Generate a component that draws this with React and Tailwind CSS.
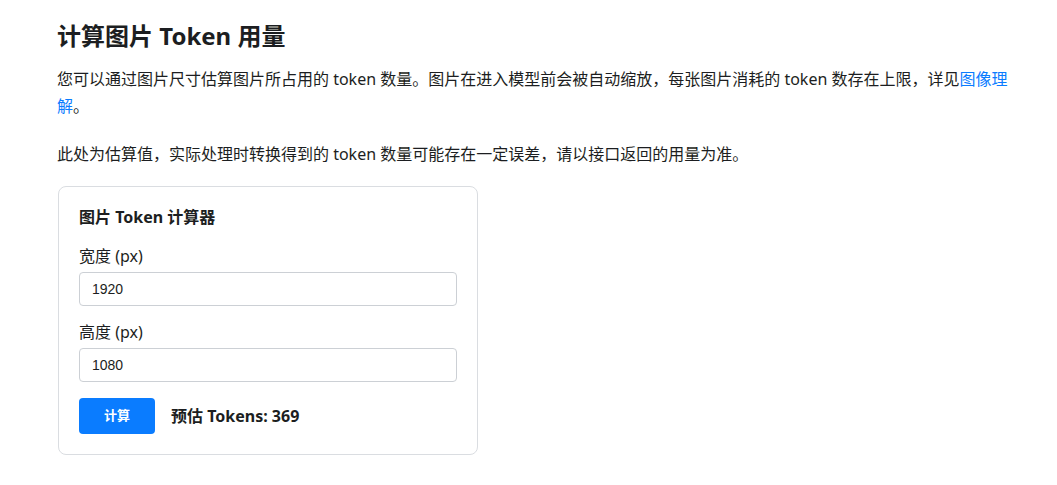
import { useState } from "react";

const font = { fontFamily: '"Noto Sans", "Noto Sans CJK SC", sans-serif' };

export default function App() {
  const [width, setWidth] = useState("1920");
  const [height, setHeight] = useState("1080");
  const [tokens, setTokens] = useState(369);

  function calc() {
    const w = Number(width) || 0;
    const h = Number(height) || 0;
    setTokens(Math.ceil((w / 28) * (h / 28) / 10) + 0 || 0);
  }

  return (
    <div className="min-h-screen bg-white text-[#1c1e21]" style={font}>
      <div className="pl-[57px] pr-[40px] pt-[18px]">
        {/* Title */}
        <h1 className="text-[24px] font-bold leading-[36px] mb-[12px]">
          计算图片 Token 用量
        </h1>

        <p className="text-[16px] leading-[27px] mb-[21px]">
          您可以通过图片尺寸估算图片所占用的 token 数量。图片在进入模型前会被自动缩放，每张图片消耗的 token 数存在上限，详见
          <a href="#" className="text-[#0a7cff]">图像理解</a>。
        </p>

        <p className="text-[16px] leading-[27px] mb-[18px]">
          此处为估算值，实际处理时转换得到的 token 数量可能存在一定误差，请以接口返回的用量为准。
        </p>

        {/* Calculator card */}
        <div className="w-[420px] border border-[#dadde1] rounded-[8px] px-[20px] pt-[18px] pb-[20px] ml-px">
          <h3 className="text-[16px] font-bold leading-[24px] mb-[15px]">图片 Token 计算器</h3>

          <label className="block text-[16px] leading-[24px] mb-[4px]">宽度 (px)</label>
          <input
            value={width}
            onChange={(e) => setWidth(e.target.value)}
            className="block w-full h-[34px] border border-[#ccd0d5] rounded-[4px] px-[12px] text-[14px] mb-[14px] outline-none"
            style={{ fontFamily: '"Liberation Sans", Arial, sans-serif' }}
          />

          <label className="block text-[16px] leading-[24px] mb-[4px]">高度 (px)</label>
          <input
            value={height}
            onChange={(e) => setHeight(e.target.value)}
            className="block w-full h-[34px] border border-[#ccd0d5] rounded-[4px] px-[12px] text-[14px] mb-[16px] outline-none"
            style={{ fontFamily: '"Liberation Sans", Arial, sans-serif' }}
          />

          <div className="flex items-center gap-[16px]">
            <button
              onClick={calc}
              className="w-[76px] h-[36px] rounded-[4px] bg-[#0a7cff] text-white text-[13px] font-semibold"
            >
              计算
            </button>
            <span className="text-[16px] font-bold">预估 Tokens: {tokens}</span>
          </div>
        </div>
      </div>
    </div>
  );
}
